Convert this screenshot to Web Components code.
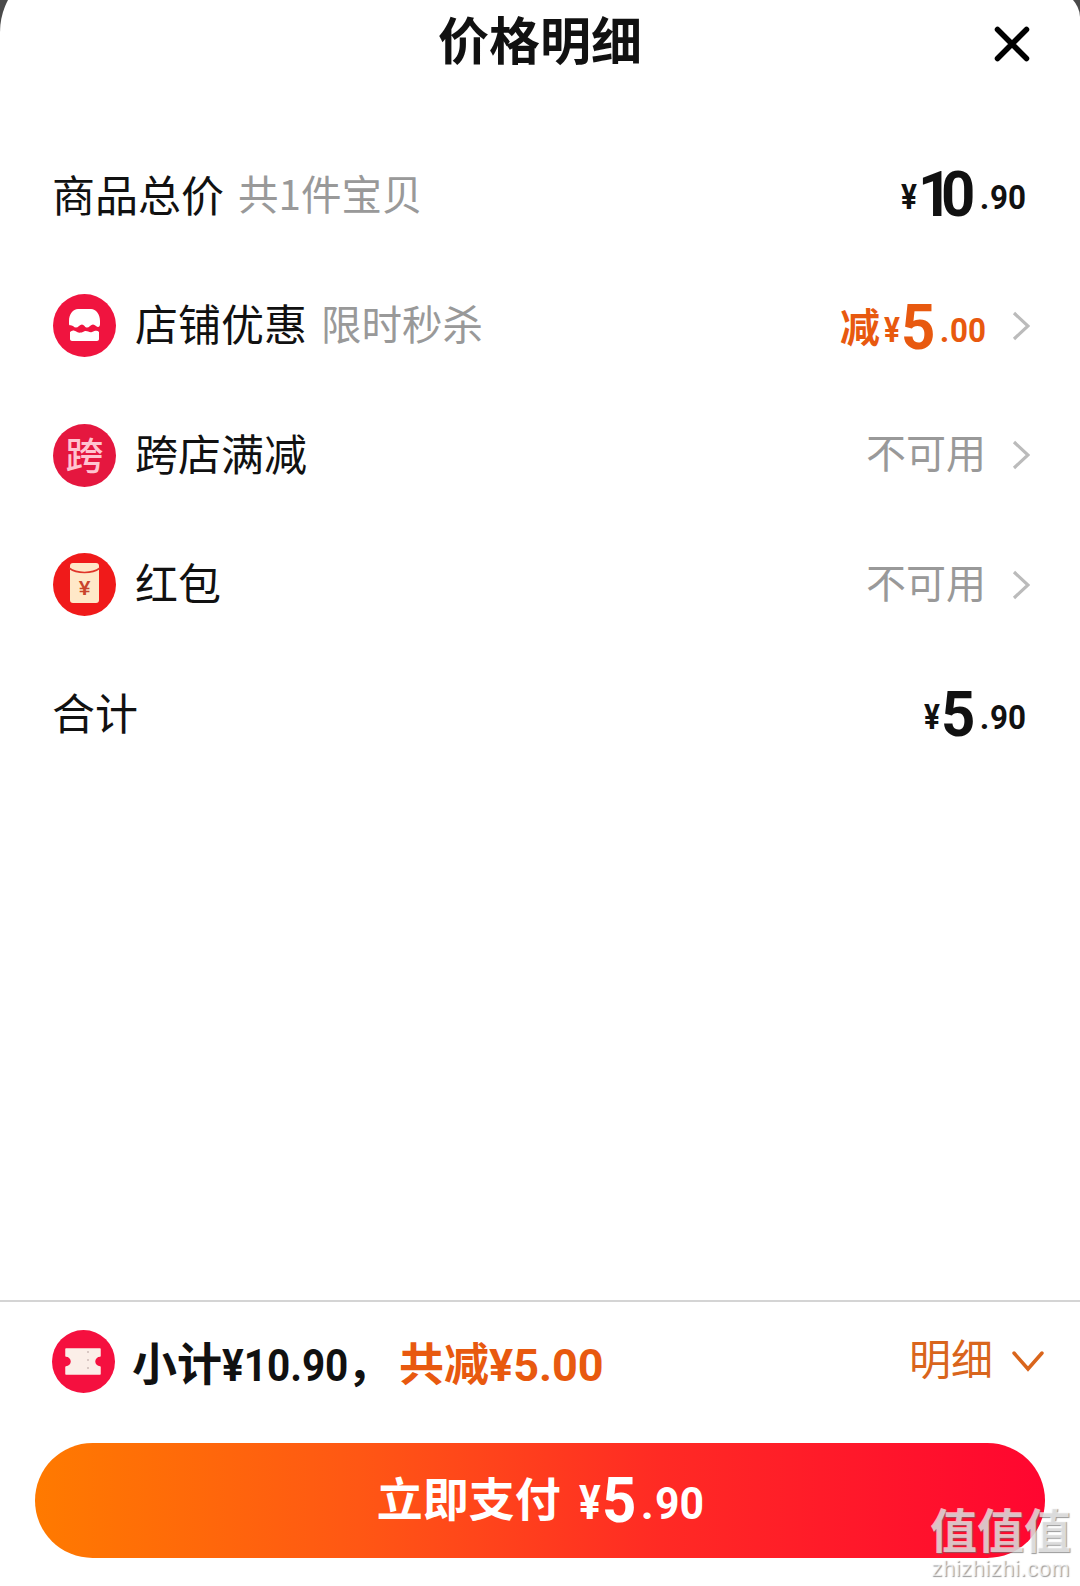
<!DOCTYPE html>
<html lang="zh">
<head>
<meta charset="utf-8">
<title>价格明细</title>
<style>
    html, body { margin: 0; background: #4a4a4a; }
    body { font-family: "Noto Sans CJK SC", "Noto Sans", sans-serif; }
</style>
</head>
<body>
<price-sheet>
    <sheet-header title="价格明细"></sheet-header>

    <price-row label="商品总价" sub="共1件宝贝">
        <price-tag slot="value" big="10" cents="90" style="margin-bottom: 4px"></price-tag>
    </price-row>
    <price-row label="店铺优惠" sub="限时秒杀" arrow>
        <row-icon slot="icon" kind="shop"></row-icon>
        <price-tag slot="value" prefix="减" big="5" cents="00" color="#e8590f" style="margin-top: 3px"></price-tag>
    </price-row>
    <price-row label="跨店满减" arrow muted>
        <row-icon slot="icon" kind="cross"></row-icon>
        <span slot="value">不可用</span>
    </price-row>
    <price-row label="红包" arrow muted>
        <row-icon slot="icon" kind="packet"></row-icon>
        <span slot="value">不可用</span>
    </price-row>
    <price-row label="合计">
        <price-tag slot="value" big="5" cents="90"></price-tag>
    </price-row>

    <sheet-footer amount="¥10.90" saved="共减¥5.00">
        <row-icon slot="icon" kind="ticket"></row-icon>
        <price-tag slot="pay" big="5" cents="90" color="#fff" large></price-tag>
    </sheet-footer>
    <water-mark></water-mark>
</price-sheet>

<script>
const DIGITS = '"Roboto", sans-serif'

class PriceSheet extends HTMLElement {
    constructor() {
        super()
        this.attachShadow({ mode: 'open' })
        this.shadowRoot.innerHTML = `
            <style>
                :host {
                    display: block;
                    position: relative;
                    width: 1080px;
                    height: 1586px;
                    overflow: hidden;
                    color: #111;
                }
                .sheet {
                    display: flex;
                    flex-direction: column;
                    height: 1622px;
                    margin-top: -36px;
                    padding-top: 36px;
                    box-sizing: border-box;
                    background: #fff;
                    border-top-left-radius: 68px;
                    border-top-right-radius: 132px 53px;
                }
            </style>
            <div class="sheet"><slot></slot></div>
        `
    }
}

class SheetHeader extends HTMLElement {
    constructor() {
        super()
        this.attachShadow({ mode: 'open' })
        this.shadowRoot.innerHTML = `
            <style>
                :host {
                    display: grid;
                    grid-template-columns: 1fr auto 1fr;
                    height: 84px;
                    margin-bottom: 47.5px;
                    padding-right: 50px;
                    padding-left: 50px;
                }
                .title {
                    grid-column: 2;
                    font-size: 51px;
                    font-weight: 700;
                    line-height: 76px;
                }
                svg { justify-self: end; display: block; margin-top: 26px; }
            </style>
            <span class="title"></span>
            <svg width="36" height="36" viewBox="0 0 36 36" fill="none" stroke="#000" stroke-width="5.500" stroke-linecap="round">
                <path d="M3.500 3.500 L32.500 32.500 M32.500 3.500 L3.500 32.500"/>
            </svg>
        `
    }

    connectedCallback() {
        this.shadowRoot.querySelector('.title').textContent = this.getAttribute('title')
    }
}

class PriceRow extends HTMLElement {
    constructor() {
        super()
        this.attachShadow({ mode: 'open' })
        this.shadowRoot.innerHTML = `
            <style>
                :host {
                    display: flex;
                    align-items: center;
                    height: 129.5px;
                    padding: 0 50px 0 52px;
                    font-size: 43px;
                }
                ::slotted([slot="icon"]) { margin-left: 1px; }
                .label { margin: 0 14px 7px 0; }
                .sub { flex: 1; margin-bottom: 7px; font-size: 40.500px; color: #999; }
                .value { display: flex; align-items: center; margin-right: 4px; }
                :host([arrow]) .value { margin-right: 0; }
                :host([muted]) .value { margin-bottom: 8px; font-size: 40px; color: #999; }
                svg { display: none; margin-left: 26px; }
                :host([arrow]) svg { display: block; }
            </style>
            <slot name="icon"></slot>
            <span class="label"></span>
            <span class="sub"></span>
            <span class="value"><slot name="value"></slot></span>
            <svg width="18" height="30" viewBox="0 0 18 30" fill="none" stroke="#bbb" stroke-width="3.200">
                <path d="M2 2 L16 15 L2 28"/>
            </svg>
        `
    }

    connectedCallback() {
        this.shadowRoot.querySelector('.label').textContent = this.getAttribute('label')
        this.shadowRoot.querySelector('.sub').textContent = this.getAttribute('sub') || ''
    }
}

// Roboto is wider than the app's DIN digits, so each part is squeezed and given its squeezed width
class PriceTag extends HTMLElement {
    constructor() {
        super()
        this.attachShadow({ mode: 'open' })
        this.shadowRoot.innerHTML = `
            <style>
                :host {
                    --small: 33px;
                    --lift: -7px;
                    display: inline-flex;
                    align-items: baseline;
                    font-family: ${DIGITS};
                    font-weight: 700;
                    line-height: 1;
                }
                :host([large]) { --small: 45px; --lift: -3px; }
                span { display: inline-block; white-space: nowrap; transform-origin: left; }
                .prefix {
                    font-family: "Noto Sans CJK SC", sans-serif;
                    font-size: 40px;
                    margin-right: 4px;
                    transform: translateY(var(--lift));
                }
                .prefix:empty { display: none; }
                .yen {
                    font-size: calc(var(--small) * 1.06);
                    width: 0.48em;
                    margin-right: 5px;
                    transform: translateY(var(--lift)) scaleX(0.85);
                }
                .big {
                    font-size: 63px;
                    letter-spacing: -0.19em;
                    width: calc(var(--n) * 0.54em - (var(--n) - 1) * 0.18em);
                    transform: translateX(-5px) scaleX(0.95);
                }
                .dot {
                    font-size: var(--small);
                    margin-right: 1px;
                    transform: translateY(var(--lift));
                }
                .cents {
                    font-size: var(--small);
                    width: 1.08em;
                    transform: translateY(var(--lift)) scaleX(0.95);
                }
            </style>
            <span class="prefix"></span><span class="yen">¥</span><span class="big"></span><span class="dot">.</span><span class="cents"></span>
        `
    }

    connectedCallback() {
        const root = this.shadowRoot
        const big = this.getAttribute('big')
        root.querySelector('.prefix').textContent = this.getAttribute('prefix') || ''
        root.querySelector('.big').textContent = big
        root.querySelector('.big').style.setProperty('--n', big.length)
        root.querySelector('.cents').textContent = this.getAttribute('cents')
        if (this.hasAttribute('color')) this.style.color = this.getAttribute('color')
    }
}

const ICONS = {
    shop: `<circle cx="31.5" cy="31.5" r="31.5" fill="#f0143f"/>
        <path d="M16 27 C16 20 20 15 25 15 H38 C43 15 47 20 47 27 V30 C47 33 45 34 43 32 C41 30 39 30 37 32 C35 34 33 34 31.5 32 C30 30 28 30 26 32 C24 34 22 34 20 32 C18 31 16 32 16 30 Z" fill="#fff"/>
        <path d="M17 38 C19 36 21 36 24 38 C26 39 28 39 31 37.500 C34 36 36 39 39 38 C42 37 44 36 46 38 V45 C46 46 45 47 44 47 H19 C18 47 17 46 17 45 Z" fill="#fff"/>`,
    cross: `<circle cx="31.5" cy="31.5" r="31.5" fill="#e5173f"/>
        <text x="31.5" y="45" font-size="38" font-weight="500" text-anchor="middle" fill="#ffc4d0" font-family="Noto Sans CJK SC, sans-serif">跨</text>`,
    packet: `<circle cx="31.5" cy="31.5" r="31.5" fill="#f01a1a"/>
        <path d="M17 13 C17 11 18 10 20 10 H43 C45 10 46 11 46 13 V47 C46 49 45 50 43 50 H20 C18 50 17 49 17 47 Z" fill="#ffe8c8"/>
        <path d="M16 15 C24 21 39 21 47 15" fill="none" stroke="#e0342a" stroke-width="1.600"/>
        <text x="31.5" y="42" font-size="21" font-weight="700" text-anchor="middle" fill="#c9432c" font-family="Liberation Sans, sans-serif">¥</text>`,
    ticket: `<circle cx="31.5" cy="31.5" r="31.5" fill="#f5103f"/>
        <path d="M14 19 H48 V26 A5.500 5.500 0 0 0 48 37 V44 H14 V37 A5.500 5.500 0 0 0 14 26 Z" fill="#fbeee8" stroke="#fbeee8" stroke-width="1.500" stroke-linejoin="round"/>
        <path d="M36 21 V42" stroke="#d9c8c4" stroke-width="2" stroke-dasharray="2 6"/>`
}

class RowIcon extends HTMLElement {
    constructor() {
        super()
        this.attachShadow({ mode: 'open' })
    }

    connectedCallback() {
        this.shadowRoot.innerHTML = `
            <style>
                :host { display: block; flex: none; width: 63px; height: 63px; margin-right: 19px; }
                svg { display: block; }
            </style>
            <svg width="63" height="63" viewBox="0 0 63 63">${ICONS[this.getAttribute('kind')]}</svg>
        `
    }
}

class SheetFooter extends HTMLElement {
    constructor() {
        super()
        this.attachShadow({ mode: 'open' })
        this.shadowRoot.innerHTML = `
            <style>
                :host {
                    display: block;
                    margin-top: auto;
                    border-top: 2px solid #d4d4d4;
                }
                .summary {
                    display: flex;
                    align-items: center;
                    height: 141px;
                    padding: 0 36px 22px 52px;
                    box-sizing: border-box;
                }
                ::slotted([slot="icon"]) { margin-right: 17px; }
                .total, .saved {
                    font-family: ${DIGITS}, "Noto Sans CJK SC";
                    font-size: 45px;
                    font-weight: 700;
                    white-space: nowrap;
                }
                .amt {
                    display: inline-block;
                    width: 125px;
                    font-size: 44px;
                    transform-origin: left;
                    transform: scaleX(0.92);
                }
                .total { margin-right: 7px; }
                .saved { flex: 1; color: #e8590f; }
                .more { margin: 0 19px 11px 0; font-size: 42px; color: #d9651c; }
                svg { flex: none; margin-bottom: 2px; }
                .pay {
                    display: flex;
                    align-items: center;
                    justify-content: center;
                    gap: 18px;
                    height: 115px;
                    margin: 0 35px 28px;
                    border-radius: 58px;
                    background: linear-gradient(90deg, #ff7a00, #ff5714 32%, #ff2a24 62%, #ff0630);
                    color: #fff;
                    font-size: 46px;
                    font-weight: 700;
                }
                .pay span { margin-bottom: 9px; }
            </style>
            <div class="summary">
                <slot name="icon"></slot>
                <span class="total">小计<span class="amt"></span>，</span>
                <span class="saved"></span>
                <span class="more">明细</span>
                <svg width="32" height="22" viewBox="0 0 32 22" fill="none" stroke="#d9651c" stroke-width="3.500" stroke-linecap="round">
                    <path d="M2 3 L16 19 L30 3"/>
                </svg>
            </div>
            <div class="pay"><span>立即支付</span><slot name="pay"></slot></div>
        `
    }

    connectedCallback() {
        this.shadowRoot.querySelector('.amt').textContent = this.getAttribute('amount')
        this.shadowRoot.querySelector('.saved').textContent = this.getAttribute('saved')
    }
}

class WaterMark extends HTMLElement {
    constructor() {
        super()
        this.attachShadow({ mode: 'open' })
        this.shadowRoot.innerHTML = `
            <style>
                :host {
                    position: absolute;
                    right: 9px;
                    bottom: 5px;
                    display: flex;
                    flex-direction: column;
                    align-items: center;
                    color: rgba(255, 255, 255, 0.68);
                    text-shadow: 1px 1px 1px rgba(110, 110, 110, 0.7);
                }
                .zh { font-size: 47px; font-weight: 700; line-height: 54px; margin-bottom: 2px; }
                .en { font-family: "Liberation Sans", sans-serif; font-size: 22px; line-height: 24px; letter-spacing: 0.5px; }
            </style>
            <span class="zh">值值值</span>
            <span class="en">zhizhizhi.com</span>
        `
    }
}

customElements.define('price-sheet', PriceSheet)
customElements.define('sheet-header', SheetHeader)
customElements.define('price-row', PriceRow)
customElements.define('price-tag', PriceTag)
customElements.define('row-icon', RowIcon)
customElements.define('sheet-footer', SheetFooter)
customElements.define('water-mark', WaterMark)
</script>
</body>
</html>
